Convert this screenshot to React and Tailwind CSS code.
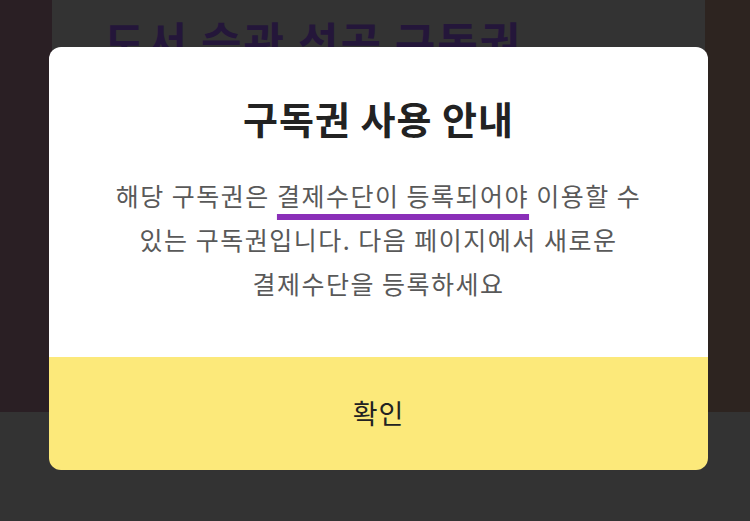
export default function App() {
  return (
    <div
      className="relative w-[750px] h-[521px] overflow-hidden bg-[#333333]"
      style={{ fontFamily: '"Noto Sans CJK KR", "Noto Sans", sans-serif' }}
    >
      <div className="flex h-[412px]">
        <div className="w-[52px] bg-[#2a1f24]" />
        <div className="flex-1 bg-[#333333] pl-[52px] pt-[12px]">
          <h2 className="text-[44px] font-bold leading-[58px] tracking-[2px] text-[#24163a]">
            도서 습관 성공 구독권
          </h2>
        </div>
        <div className="w-[45px] bg-[#2d2420]" />
      </div>

      <div className="absolute left-[49px] top-[47px] w-[659px] rounded-[12px] overflow-hidden flex flex-col">
        <div className="h-[310px] bg-white flex flex-col items-center pt-[48px]">
          <h1 className="text-[38px] font-bold leading-[46px] tracking-[1px] text-[#222222]">
            구독권 사용 안내
          </h1>
          <p className="mt-[32px] text-[25px] leading-[44px] tracking-[1.5px] text-[#595959] text-center">
            해당 구독권은{" "}
            <span className="underline decoration-[#8a2fb8] decoration-[6px] underline-offset-[8px]">
              결제수단이 등록되어야
            </span>{" "}
            이용할 수
            <br />
            있는 구독권입니다. 다음 페이지에서 새로운
            <br />
            결제수단을 등록하세요
          </p>
        </div>
        <button className="h-[113px] bg-[#fce97a] text-[27px] tracking-[1px] text-[#222222] flex items-center justify-center">
          확인
        </button>
      </div>
    </div>
  );
}
